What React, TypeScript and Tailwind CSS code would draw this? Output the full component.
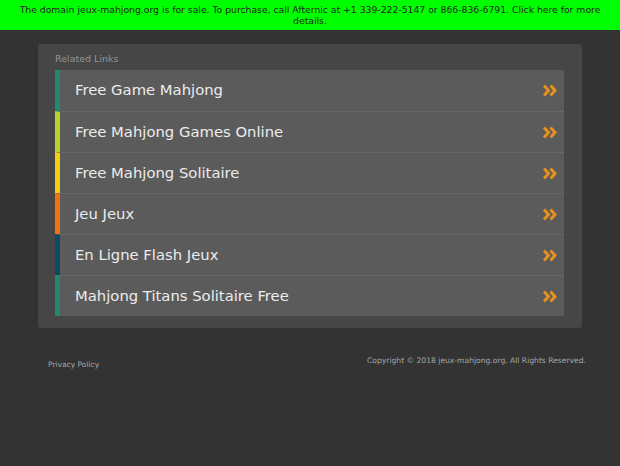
import React from "react";

const rows = [
  { t: "Free Game Mahjong", c: "border-l-[#1f8a6f]" },
  { t: "Free Mahjong Games Online", c: "border-l-[#b8cf2c]" },
  { t: "Free Mahjong Solitaire", c: "border-l-[#f2d010]" },
  { t: "Jeu Jeux", c: "border-l-[#f07312]" },
  { t: "En Ligne Flash Jeux", c: "border-l-[#0d4b5e]" },
  { t: "Mahjong Titans Solitaire Free", c: "border-l-[#1f8a6f]" },
];

function Arrows() {
  return (
    <svg width="15" height="13" viewBox="0 0 15 13" className="block">
      <path d="M2 1.5 L6.5 6.5 L2 11.5" fill="none" stroke="#e8901c" strokeWidth="3" strokeLinejoin="miter" />
      <path d="M8.5 1.5 L13 6.5 L8.5 11.5" fill="none" stroke="#e8901c" strokeWidth="3" strokeLinejoin="miter" />
    </svg>
  );
}

export default function App() {
  return (
    <div
      className="min-h-[466px] w-[620px] bg-[#333333]"
      style={{ fontFamily: '"DejaVu Sans", Verdana, sans-serif' }}
    >
      <div className="h-[30px] bg-[#00ff00] px-[12px] pt-[4px] text-center text-[9.25px] leading-[11px] text-[#222222]">
        The domain jeux-mahjong.org is for sale. To purchase, call Afternic at +1 339-222-5147 or 866-836-6791. Click here for more details.
      </div>
      <div className="mx-[38px] mt-[14px] rounded-[3px] bg-[#464646] pl-[17px] pr-[18px] pb-[12px] pt-[9px]">
        <div className="mb-[5px] h-[12px] text-[9.5px] leading-[12px] text-[#959595]">Related Links</div>
        <div className="flex flex-col">
          {rows.map((r, i) => (
            <div
              key={i}
              className={`flex h-[41px] items-center justify-between border-l-[5px] bg-[#5b5b5b] pl-[15px] pr-[7px] ${r.c} ${i > 0 ? "border-t border-t-[#666666]" : ""}`}
            >
              <span className="text-[14.8px] text-[#ececec]">{r.t}</span>
              <Arrows />
            </div>
          ))}
        </div>
      </div>
      <div className="ml-[48px] mr-[34px] mt-[26px] flex items-start justify-between">
        <span className="mt-[5px] text-[7.5px] text-[#a8a8a8]">Privacy Policy</span>
        <span className="mt-[1px] text-[7.6px] text-[#a8a8a8]">Copyright © 2018 jeux-mahjong.org. All Rights Reserved.</span>
      </div>
    </div>
  );
}
